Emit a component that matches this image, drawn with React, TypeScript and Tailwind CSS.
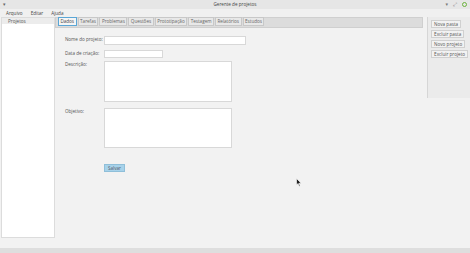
import React from 'react';

const tabs = ['Dados', 'Tarefas', 'Problemas', 'Questões', 'Prototipação', 'Testagem', 'Relatórios', 'Estudos'];
const actions = ['Nova pasta', 'Excluir pasta', 'Novo projeto', 'Excluir projeto'];

const Field = ({ label, children, className }: { label: string; children: React.ReactNode; className?: string }) => (
  <div className={'flex items-start ' + (className ?? '')}>
    <span className="w-[39px] shrink-0 pt-[1px] whitespace-nowrap">{label}</span>
    {children}
  </div>
);

export default function App() {
  return (
    <div className="w-[470px] h-[253px] flex flex-col bg-[#f2f2f2] text-[#555] text-[4.6px] leading-none overflow-hidden font-['Open_Sans','DejaVu_Sans',sans-serif]">
      {/* title bar */}
      <div className="h-[9px] bg-[#e6e6e6] flex items-center px-[3px] relative">
        <span className="text-[#666] text-[5px]">▾</span>
        <span className="absolute left-0 right-0 text-center text-[#444]">Gerente de projetos</span>
        <div className="ml-auto flex items-center gap-[5px] text-[#777]">
          <span className="text-[5px]">▾</span>
          <span className="text-[5px]">⤢</span>
          <span className="w-[5px] h-[5px] rounded-full border-[1.5px] border-[#6bb33c]" />
        </div>
      </div>
      {/* menu */}
      <div className="h-[8px] bg-[#f0f0f0] flex items-center gap-[8px] pl-[6px] text-[#444]">
        <span>Arquivo</span>
        <span>Editar</span>
        <span>Ajuda</span>
      </div>
      <div className="flex flex-1 min-h-0">
        {/* projects tree */}
        <div className="w-[54px] ml-[1px] mb-[10px] bg-white border border-[#dcdcdc] flex flex-col">
          <div className="h-[6px] bg-[#ececec] flex items-center pl-[6px] text-[#555]">Projetos</div>
        </div>
        {/* tabs and form */}
        <div className="w-[369px] flex flex-col">
          <div className="h-[11px] bg-[#dcdcdc] border border-[#cfcfcf] flex items-end gap-[1px] pl-[2px] pb-[1px]">
            {tabs.map((t, i) => (
              <div
                key={t}
                className={
                  i === 0
                    ? 'h-[9px] px-[1.5px] flex items-center bg-[#f5f5f5] border border-[#5aa6d6] text-[#444]'
                    : 'h-[9px] px-[1.5px] flex items-center bg-[#e8e8e8] border border-[#c8c8c8] text-[#666]'
                }
              >
                {t}
              </div>
            ))}
          </div>
          <div className="flex flex-col pl-[10px] pt-[8px] text-[#555]">
            <Field label="Nome do projeto:">
              <div className="w-[142px] h-[9px] bg-white border border-[#d8d8d8]" />
            </Field>
            <Field label="Data de criação:" className="mt-[5px]">
              <div className="w-[59px] h-[8px] bg-white border border-[#d8d8d8]" />
            </Field>
            <Field label="Descrição:" className="mt-[3px]">
              <div className="w-[128px] h-[41px] bg-white border border-[#d8d8d8]" />
            </Field>
            <Field label="Objetivo:" className="mt-[6px]">
              <div className="w-[128px] h-[40px] bg-white border border-[#d8d8d8]" />
            </Field>
            <div className="pl-[39px] mt-[16px]">
              <div className="w-[21px] h-[8px] bg-[#a7d2ea] border border-[#8fbfd9] flex items-center justify-center text-[#556]">
                Salvar
              </div>
            </div>
          </div>
        </div>
        {/* side actions */}
        <div className="ml-[4px] w-[43px] h-[81px] bg-[#ebebeb] border-l border-[#d6d6d6] flex flex-col items-start gap-[2px] pt-[3px] pl-[3px]">
          {actions.map((a) => (
            <div key={a} className="h-[8px] px-[2px] flex items-center bg-[#f2f2f2] border border-[#d0d0d0] text-[#555] whitespace-nowrap">
              {a}
            </div>
          ))}
        </div>
      </div>
      <div className="h-[5px] bg-[#dedede]" />
      {/* mouse cursor */}
      <svg className="absolute left-[296px] top-[178px]" width="6" height="9" viewBox="0 0 6 9">
        <path d="M0.5 0.5 L0.5 7 L2 5.5 L3.2 8.3 L4.2 7.9 L3 5.2 L5.2 5.2 Z" fill="#222" stroke="#fff" strokeWidth="0.6" />
      </svg>
    </div>
  );
}
